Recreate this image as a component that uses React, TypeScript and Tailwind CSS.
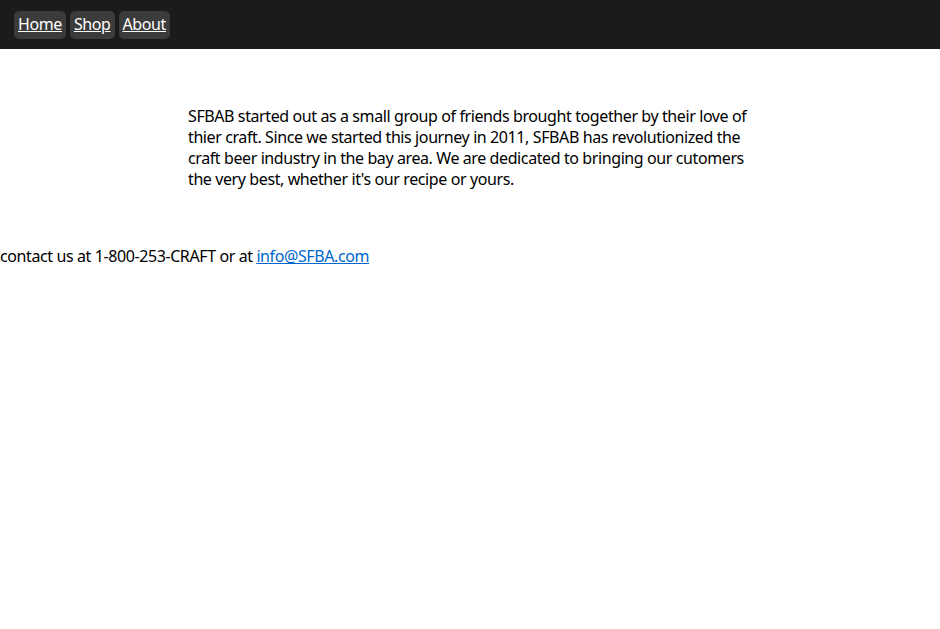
const links = ["Home", "Shop", "About"];

export default function App() {
  return (
    <div className="min-h-screen bg-white text-black font-['Noto_Sans',sans-serif] text-[16px] leading-[21px] tracking-[-0.4px]">
      {/* Nav bar */}
      <nav className="flex h-[49px] items-center gap-[4px] bg-[#1b1b1b] px-[14px]">
        {links.map((l) => (
          <a key={l} href="#" className="flex h-[28px] items-center rounded-[5px] bg-[#3b3b3b] px-[4px] text-[16px] text-white underline">
            {l}
          </a>
        ))}
      </nav>

      {/* About text */}
      <section className="mx-auto mt-[57px] w-[60%]">
        <p>
          SFBAB started out as a small group of friends brought together by their love of thier craft. Since we started
          this journey in 2011, SFBAB has revolutionized the craft beer industry in the bay area. We are dedicated to
          bringing our cutomers the very best, whether it's our recipe or yours.
        </p>
      </section>

      {/* Footer */}
      <footer className="mt-[56px]">
        contact us at 1-800-253-CRAFT or at{" "}
        <a href="#" className="text-[#0066cc] underline">
          info@SFBA.com
        </a>
      </footer>
    </div>
  );
}
